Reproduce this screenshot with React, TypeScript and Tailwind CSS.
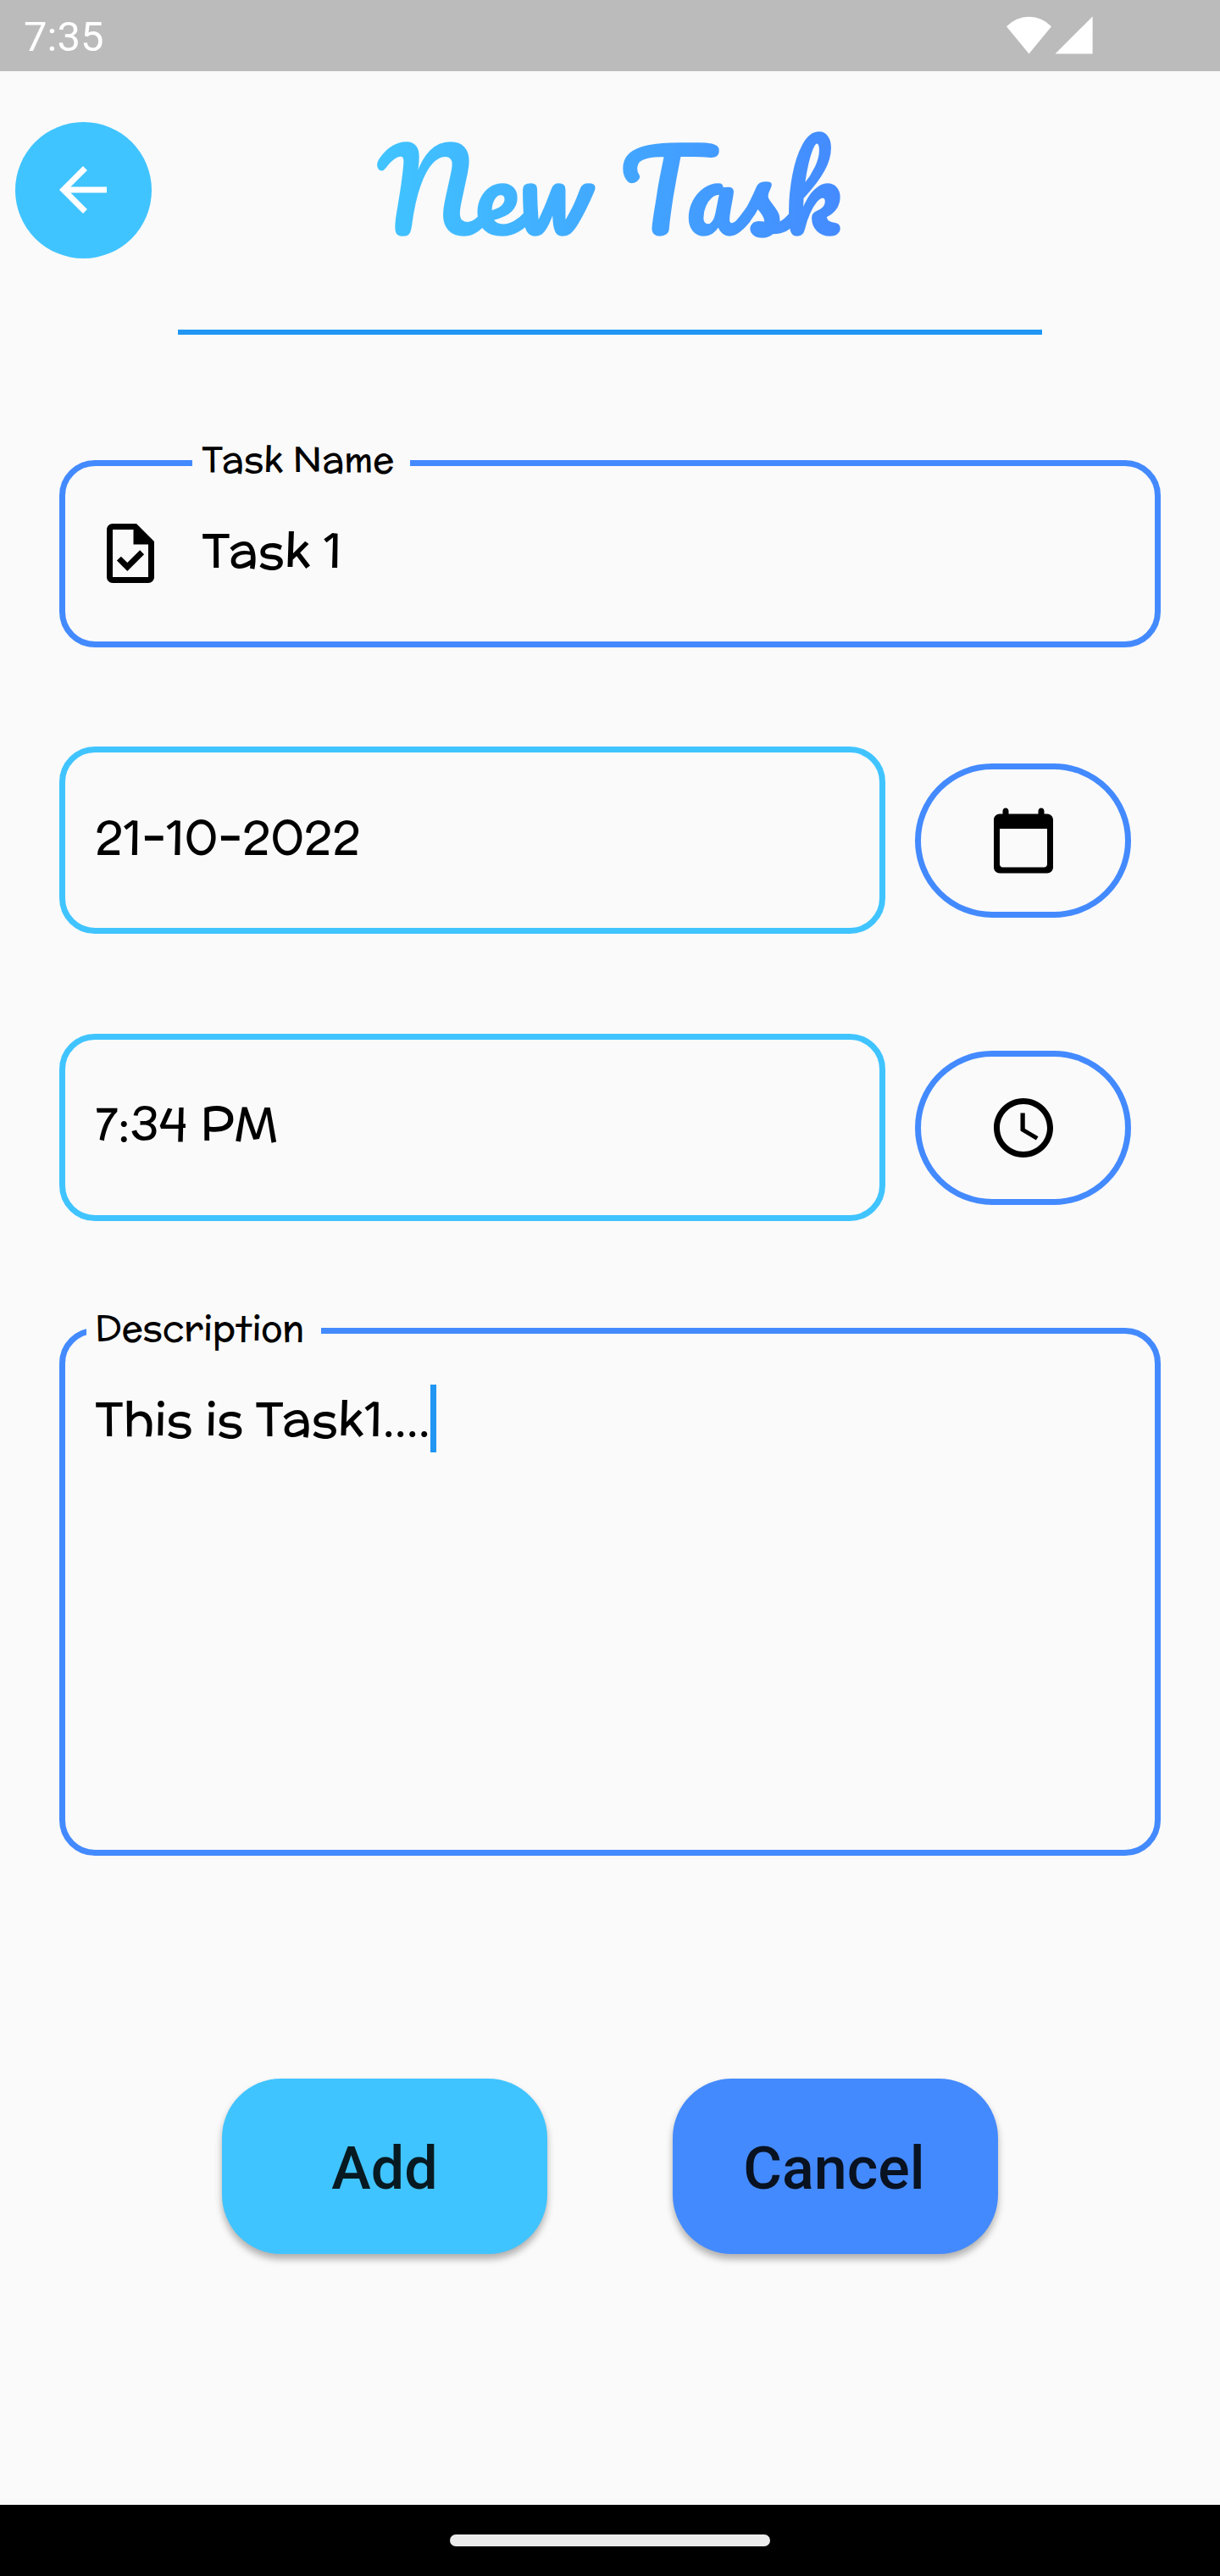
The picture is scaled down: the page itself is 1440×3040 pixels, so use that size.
import React from "react";

const BODY = "font-['McLaren','Lato',sans-serif] text-black whitespace-pre";

function Icon({ d }: { d: string }) {
  return (
    <svg viewBox="0 0 24 24" className="size-[84px] shrink-0" aria-hidden="true">
      <path d={d} fill="currentColor" fillRule="evenodd" />
    </svg>
  );
}

const ARROW = "M20 11H7.83l5.59-5.59L12 4l-8 8 8 8 1.41-1.41L7.83 13H20v-2z";
const TASK =
  "M14 2H6c-1.1 0-1.99.9-1.99 2L4 20c0 1.1.89 2 1.99 2H18c1.1 0 2-.9 2-2V8l-6-6zm4 18H6V4h7v5h5v11zm-9.18-6.95L7.4 14.46 10.94 18l5.66-5.66-1.41-1.41-4.24 4.24-2.13-2.12z";
const CALENDAR =
  "M20 3h-1V2c0-.55-.45-1-1-1s-1 .45-1 1v1H7V2c0-.55-.45-1-1-1s-1 .45-1 1v1H4c-1.1 0-2 .9-2 2v16c0 1.1.9 2 2 2h16c1.1 0 2-.9 2-2V5c0-1.1-.9-2-2-2zm-1 18H5c-.55 0-1-.45-1-1V8h16v12c0 .55-.45 1-1 1z";
const CLOCK =
  "M11.99 2C6.47 2 2 6.48 2 12s4.47 10 9.99 10C17.52 22 22 17.52 22 12S17.52 2 11.99 2zM12 20c-4.42 0-8-3.58-8-8s3.58-8 8-8 8 3.58 8 8-3.58 8-8 8zm.5-13H11v6l5.25 3.15.75-1.23-4.5-2.67z";

function StatusBar() {
  return (
    <div className="flex h-[84px] shrink-0 items-start justify-between bg-[#bbbbbb] text-white">
      <span className="pt-[14px] pl-[28px] font-['Roboto',sans-serif] text-[49px] leading-[60px]">7:35</span>
      <svg viewBox="0 0 102 45" className="mt-[19px] mr-[150px] h-[45px] w-[102px]" aria-hidden="true">
        <path d="M0 12.3A36 36 0 0 1 53 12.3L26.5 44.5z" fill="currentColor" />
        <path d="M57.5 44.5L101.6 .6V44.5z" fill="currentColor" />
      </svg>
    </div>
  );
}

function PickerRow({ value, icon, inset }: { value: string; icon: string; inset: string }) {
  return (
    <div className="flex h-[221px] items-center gap-[35px]">
      <div className={"flex h-full w-[975px] items-center rounded-[42px] border-[7px] border-[#40c4ff] pl-[35px] " + inset}>
        <span className={"text-[56px] leading-[80px] " + BODY}>{value}</span>
      </div>
      <button className="flex h-[182px] w-[255px] items-center justify-center rounded-full border-[7px] border-[#448aff] text-black">
        <Icon d={icon} />
      </button>
    </div>
  );
}

export default function App() {
  return (
    <div className="flex h-[3040px] w-[1440px] flex-col overflow-hidden bg-[#fafafa]">
      <StatusBar />
      <header className="flex h-[305px] shrink-0 items-start">
        <button className="mt-[59.5px] ml-[17.5px] flex size-[161px] shrink-0 items-center justify-center rounded-full bg-[#40c4ff] text-white">
          <Icon d={ARROW} />
        </button>
        <h1 className="mx-auto mt-[28px] bg-linear-to-r from-[#40c4ff] to-[#448aff] bg-clip-text pr-[6px] pl-[4px] font-['Pacifico','Lato',cursive] text-[129px] leading-[220px] whitespace-nowrap text-transparent [-webkit-text-stroke:1.5px_transparent]">
          New Task
        </h1>
        <div className="w-[178.5px] shrink-0" />
      </header>
      <div className="mx-auto h-[6px] w-[1020px] shrink-0 bg-[#2196f3]" />

      <main className="flex flex-1 flex-col px-[70px] pt-[148px]">
        <div className="relative flex h-[221px] shrink-0 items-start rounded-[42px] border-[7px] border-[#448aff] pt-[59px] pl-[35px]">
          <span className={"absolute -top-[38px] left-[150px] h-[60px] w-[257px] bg-[#fafafa] pl-[11px] text-[42px] leading-[60px] " + BODY}>
            Task Name
          </span>
          <div className="pt-[2px]">
            <Icon d={TASK} />
          </div>
          <span className={"pl-[42px] text-[56px] leading-[80px] " + BODY}>Task 1</span>
        </div>

        <div className="mt-[117px] flex flex-col gap-[118px]">
          <PickerRow value="21-10-2022" icon={CALENDAR} inset="pb-[8px]" />
          <PickerRow value="7:34 PM" icon={CLOCK} inset="pb-[9px]" />
        </div>

        <div className="relative mt-[126px] flex h-[623px] shrink-0 items-start rounded-[42px] border-[7px] border-[#448aff] pt-[60px] pl-[35px]">
          <span className={"absolute -top-[37px] left-[25px] h-[60px] w-[277px] bg-[#fafafa] pl-[10px] text-[42px] leading-[60px] " + BODY}>
            Description
          </span>
          <span className={"text-[56px] leading-[80px] " + BODY}>This is Task1....</span>
          <span className="h-[80px] w-[7px] bg-[#2196f3]" />
        </div>

        <div className="mt-[263px] flex justify-center gap-[148px] font-['Roboto',sans-serif] text-[70px] font-medium text-black/87">
          <button className="h-[207px] w-[384px] rounded-[70px] bg-[#40c4ff] pt-[5px] shadow-[0_6px_9px_rgba(0,0,0,0.3)]">Add</button>
          <button className="h-[207px] w-[384px] rounded-[70px] bg-[#448aff] pt-[5px] pr-[3px] shadow-[0_6px_9px_rgba(0,0,0,0.3)]">Cancel</button>
        </div>
      </main>

      <nav className="flex h-[84px] shrink-0 items-center justify-center bg-black">
        <div className="h-[14px] w-[378px] rounded-full bg-[#ebebeb]" />
      </nav>
    </div>
  );
}
